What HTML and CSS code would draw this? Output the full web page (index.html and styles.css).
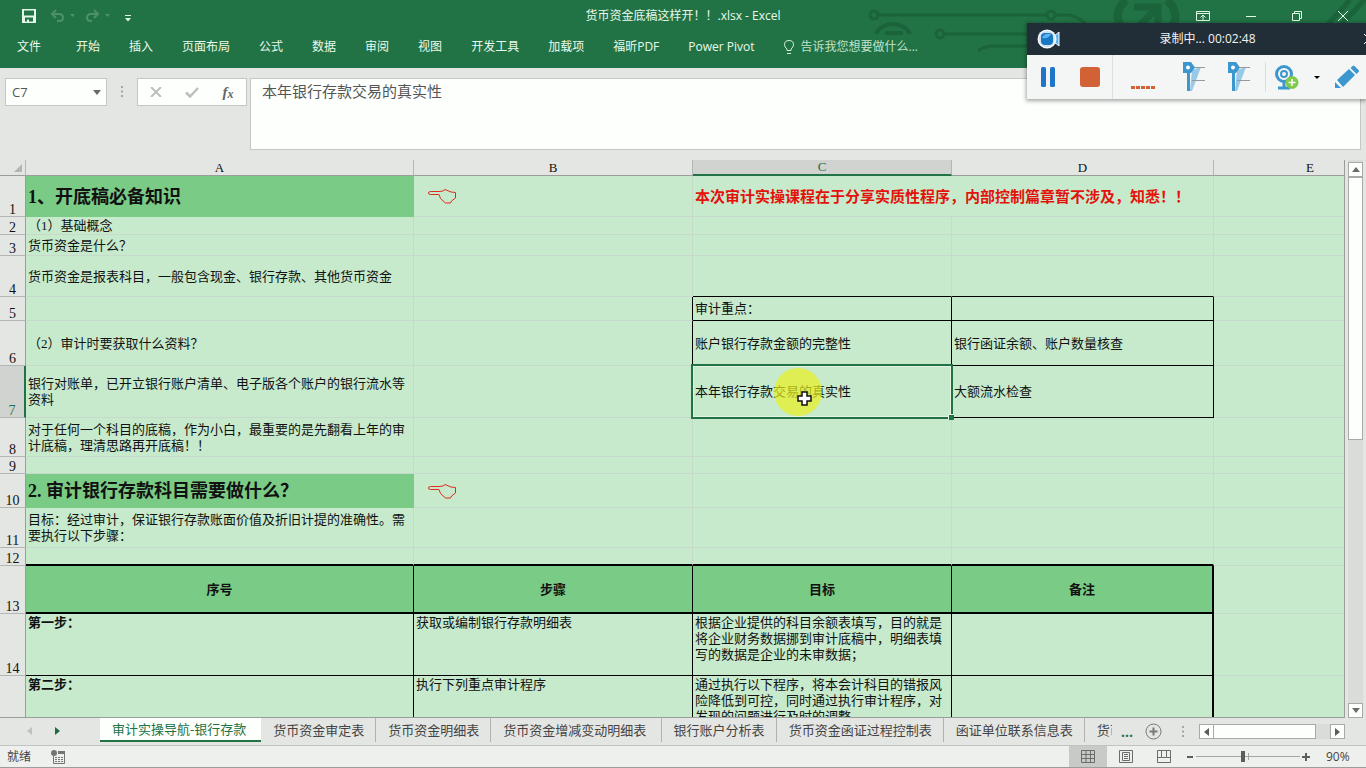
FILE: index.html
```html
<!DOCTYPE html>
<html lang="zh-CN">
<head>
<meta charset="utf-8">
<meta name="viewport" content="width=device-width, initial-scale=1">
<title>货币资金底稿这样开！！.xlsx - Excel</title>
<link rel="stylesheet" href="styles.css">
</head>
<body>
<div class="app">
  <header class="ribbon">
    <svg class="circuit" width="510" height="68" viewBox="0 0 510 68" fill="none" stroke="#1b633b" stroke-width="3" aria-hidden="true">
      <circle cx="18" cy="15" r="4"/><path d="M22 15h169"/><circle cx="195" cy="15" r="4"/><path d="M199 15h12q8 0 18 8"/>
      <path d="M20 34a18 15 0 0 1 34 0" stroke-width="4"/><path d="M29 33h18" stroke-width="4"/>
      <circle cx="84" cy="34" r="4"/><path d="M88 34h100"/><path d="M122 51q6-5 16-5h40" />
      <path d="M270 0q-15 14-3 30M311 0q15 14 3 30" stroke-width="8"/><path d="M278 7h24v20M302 7l-20 20" stroke-width="7"/>
      <path d="M472 24l22-24M486 24l24-26" stroke-width="5"/>
    </svg>
    <div class="titlebar">
      <div class="quick">
        <button class="icon-btn" aria-label="保存"><svg width="14" height="14" viewBox="0 0 14 14"><path fill="#e4f8e8" fill-rule="evenodd" d="M0 0h14v14H0zM2 1.500v5h10v-5zM3 8.500v4h2v-2h2v2h4v-4z"/></svg></button>
        <button class="icon-btn undo" aria-label="撤消"><svg width="26" height="14" viewBox="0 0 26 14" fill="none" stroke="#4d9069" stroke-width="2"><path d="M6 1L2 5l4 4M2 5h7q4 0 4 3.500T9 12H7"/><path d="M20 5h5l-2.500 3z" fill="#4d9069" stroke="none"/></svg></button>
        <button class="icon-btn redo" aria-label="恢复"><svg width="26" height="14" viewBox="0 0 26 14" fill="none" stroke="#4d9069" stroke-width="2"><path d="M9 1l4 4-4 4M13 5H6Q2 5 2 8.500T6 12h1"/><path d="M20 5h5l-2.500 3z" fill="#4d9069" stroke="none"/></svg></button>
        <button class="icon-btn custom" aria-label="自定义快速访问工具栏"><svg width="6" height="7" viewBox="0 0 6 7" fill="#e4f8e8"><path d="M0 0h6v1H0zM0 3h6L3 6.500z"/></svg></button>
      </div>
      <h1 class="title">货币资金底稿这样开！！.xlsx - Excel</h1>
      <div class="window-btns">
        <button class="icon-btn" aria-label="功能区显示选项"><svg width="14" height="12" viewBox="0 0 14 12" fill="none" stroke="#e4f8e8"><path d="M.5 1.500h13v9H.5zM1 3.500h12M7 10V5M4.500 7.500L7 5l2.500 2.500"/></svg></button>
        <button class="icon-btn" aria-label="最小化"><svg width="10" height="12" viewBox="0 0 10 12" stroke="#e4f8e8"><path d="M0 6.500h10"/></svg></button>
        <button class="icon-btn" aria-label="还原"><svg width="10" height="12" viewBox="0 0 10 12" fill="none" stroke="#e4f8e8"><path d="M.5 3.500h7v7h-7zM2.500 3.500v-2h7v7h-2"/></svg></button>
        <button class="icon-btn" aria-label="关闭"><svg width="10" height="12" viewBox="0 0 10 12" stroke="#e4f8e8"><path d="M0 1l10 10M10 1L0 11"/></svg></button>
      </div>
    </div>
    <nav class="menu">
      <button class="file">文件</button><button>开始</button><button>插入</button><button>页面布局</button><button>公式</button><button>数据</button><button>审阅</button><button>视图</button><button>开发工具</button><button>加载项</button><button>福昕PDF</button><button>Power Pivot</button>
      <button class="tell"><svg width="10" height="14" viewBox="0 0 10 14" fill="none" stroke="#d3ecd9"><path d="M3 10.500V9Q.5 7 .5 4.800 .5.500 5 .5t4.500 4.300Q9.500 7 7 9v1.500zM3 13.500h4"/></svg>告诉我您想要做什么...</button>
    </nav>
  </header>

  <section class="formula">
    <div class="namebox"><input aria-label="名称框" value="C7"><button class="icon-btn" aria-label="展开名称框"><svg width="8" height="5" viewBox="0 0 8 5"><path fill="#686a68" d="M0 0h8L4 5z"/></svg></button></div>
    <svg class="grip" width="2" height="11" viewBox="0 0 2 11" fill="#a5a7a5"><path d="M0 0h2v2H0zM0 4.500h2v2H0zM0 9h2v2H0z"/></svg>
    <div class="fx">
      <button class="icon-btn" aria-label="取消"><svg width="12" height="10" viewBox="0 0 12 10" stroke="#bdbfbd" stroke-width="2"><path d="M1 0l10 10M11 0L1 10"/></svg></button>
      <button class="icon-btn" aria-label="输入"><svg width="14" height="11" viewBox="0 0 14 11" fill="none" stroke="#bdbfbd" stroke-width="2.500"><path d="M1 5.500l4 4L13 1"/></svg></button>
      <button class="icon-btn fn" aria-label="插入函数">f<small>x</small></button>
    </div>
    <textarea aria-label="编辑栏" spellcheck="false">本年银行存款交易的真实性</textarea>
  </section>

  <main class="work">
    <div class="sheet">
      <table>
        <colgroup><col class="c-num"><col class="c-a"><col class="c-b"><col class="c-c"><col class="c-d"><col></colgroup>
        <thead>
          <tr><th class="corner"><svg width="8" height="8" viewBox="0 0 8 8"><path fill="#b4b6b4" d="M8 0v8H0z"/></svg></th><th>A</th><th>B</th><th class="on">C</th><th>D</th><th class="e">E</th></tr>
        </thead>
        <tbody>
          <tr class="h41"><th>1</th><td class="fill big">1、开底稿必备知识</td><td class="hand"><svg width="28" height="15" viewBox="0 0 28 15" fill="none" stroke="#e0291f"><path d="M11 2.500H2.500Q.5 2.500.5 4t2 1.500H11l1.500 4 5 4.500h5l1-2 4-3V3.500L23 3l-6-2.500-2 1.500z"/></svg></td><td class="red" colspan="2">本次审计实操课程在于分享实质性程序，内部控制篇章暂不涉及，知悉！！</td><td></td></tr>
          <tr class="h18"><th>2</th><td>（1）基础概念</td><td></td><td></td><td></td><td></td></tr>
          <tr class="h21"><th>3</th><td>货币资金是什么？</td><td></td><td></td><td></td><td></td></tr>
          <tr class="h41"><th>4</th><td>货币资金是报表科目，一般包含现金、银行存款、其他货币资金</td><td></td><td class="bb"></td><td class="bb"></td><td></td></tr>
          <tr class="h24"><th>5</th><td></td><td class="br"></td><td class="bb br">审计重点：</td><td class="bb br"></td><td></td></tr>
          <tr class="h45"><th>6</th><td>（2）审计时要获取什么资料？</td><td class="br"></td><td class="bb br">账户银行存款金额的完整性</td><td class="bb br">银行函证余额、账户数量核查</td><td></td></tr>
          <tr class="h52"><th class="on">7</th><td>银行对账单，已开立银行账户清单、电子版各个账户的银行流水等资料</td><td class="br"></td><td class="bb br selected"><span class="spot"></span>本年银行存款交易的真实性<svg class="cursor" width="15" height="15" viewBox="0 0 15 15"><path fill="#fff" stroke="#111" stroke-width="1.500" d="M5 1h5v4h4v5h-4v4H5v-4H1V5h4z"/></svg><span class="handle"></span></td><td class="bb br">大额流水检查</td><td></td></tr>
          <tr class="h39"><th>8</th><td>对于任何一个科目的底稿，作为小白，最重要的是先翻看上年的审计底稿，理清思路再开底稿！！</td><td></td><td></td><td></td><td></td></tr>
          <tr class="h17"><th>9</th><td></td><td></td><td></td><td></td><td></td></tr>
          <tr class="h34"><th>10</th><td class="fill big">2. 审计银行存款科目需要做什么？</td><td class="hand"><svg width="28" height="15" viewBox="0 0 28 15" fill="none" stroke="#e0291f"><path d="M11 2.500H2.500Q.5 2.500.5 4t2 1.500H11l1.500 4 5 4.500h5l1-2 4-3V3.500L23 3l-6-2.500-2 1.500z"/></svg></td><td></td><td></td><td></td></tr>
          <tr class="h40"><th>11</th><td>目标：经过审计，保证银行存款账面价值及折旧计提的准确性。需要执行以下步骤：</td><td></td><td></td><td></td><td></td></tr>
          <tr class="h18 thick"><th>12</th><td></td><td></td><td></td><td></td><td></td></tr>
          <tr class="h48 thick heads"><th>13</th><td>序号</td><td>步骤</td><td>目标</td><td>备注</td><td></td></tr>
          <tr class="h62 steps"><th>14</th><td><b>第一步：</b></td><td>获取或编制银行存款明细表</td><td>根据企业提供的科目余额表填写，目的就是将企业财务数据挪到审计底稿中，明细表填写的数据是企业的未审数据；</td><td></td><td></td></tr>
          <tr class="h62 steps"><th></th><td><b>第二步：</b></td><td>执行下列重点审计程序</td><td>通过执行以下程序，将本会计科目的错报风险降低到可控，同时通过执行审计程序，对发现的问题进行及时的调整</td><td></td><td></td></tr>
        </tbody>
      </table>
    </div>
    <div class="vscroll">
      <button class="arrow" aria-label="向上滚动"><svg width="8" height="5" viewBox="0 0 8 5"><path fill="#6a6c6a" d="M0 5h8L4 0z"/></svg></button>
      <div class="vthumb"></div>
      <button class="arrow down" aria-label="向下滚动"><svg width="8" height="5" viewBox="0 0 8 5"><path fill="#6a6c6a" d="M0 0h8L4 5z"/></svg></button>
    </div>
  </main>

  <div class="sheetbar">
    <div class="sheetnav">
      <button class="icon-btn" aria-label="上一张"><svg width="5" height="8" viewBox="0 0 5 8"><path fill="#bfc1bf" d="M5 0v8L0 4z"/></svg></button>
      <button class="icon-btn" aria-label="下一张"><svg width="5" height="8" viewBox="0 0 5 8"><path fill="#1e6b41" d="M0 0v8l5-4z"/></svg></button>
    </div>
    <div class="tabs">
      <button class="tab active">审计实操导航-银行存款</button><button class="tab">货币资金审定表</button><button class="tab">货币资金明细表</button><button class="tab">货币资金增减变动明细表&nbsp;</button><button class="tab">银行账户分析表</button><button class="tab">货币资金函证过程控制表</button><button class="tab">函证单位联系信息表</button><button class="tab">货币</button>
    </div>
    <div class="tabtools">
      <button class="more" aria-label="更多工作表">...</button>
      <button class="icon-btn" aria-label="新工作表"><svg width="17" height="17" viewBox="0 0 17 17" fill="none" stroke="#777977"><circle cx="8.500" cy="8.500" r="7.500"/><path stroke-width="2" d="M8.500 4.500v8M4.500 8.500h8"/></svg></button>
      <svg class="grip" width="2" height="11" viewBox="0 0 2 11" fill="#a5a7a5"><path d="M0 0h2v2H0zM0 4.500h2v2H0zM0 9h2v2H0z"/></svg>
      <div class="hscroll">
        <button class="arrow" aria-label="向左滚动"><svg width="5" height="8" viewBox="0 0 5 8"><path fill="#5a5c5a" d="M5 0v8L0 4z"/></svg></button>
        <div class="hthumb"></div>
        <button class="arrow right" aria-label="向右滚动"><svg width="5" height="8" viewBox="0 0 5 8"><path fill="#5a5c5a" d="M0 0v8l5-4z"/></svg></button>
      </div>
    </div>
  </div>

  <footer class="status">
    <span>就绪</span>
    <svg class="macro" width="14" height="14" viewBox="0 0 14 14"><path fill="none" stroke="#737573" d="M2.500 6v7.500h11V3H7"/><path fill="#737573" d="M7 1h7v3H7zM4 7h2v1H4zM7 7h2v1H7zM10 7h2v1h-2zM4 9h2v1H4zM7 9h2v1H7zM10 9h2v1h-2zM4 11h2v1H4zM7 11h2v1H7zM10 11h2v1h-2z"/><circle cx="3" cy="3" r="3" fill="#737573"/></svg>
    <div class="views">
      <button class="view on" aria-label="普通"><svg width="14" height="13" viewBox="0 0 14 13" fill="none" stroke="#6b6d6b"><path d="M.5.500h13v12H.5zM.5 4.500h13M.5 8.500h13M5 .5v12M9.500.500v12"/></svg></button>
      <button class="view" aria-label="页面布局"><svg width="14" height="13" viewBox="0 0 14 13" fill="none" stroke="#6b6d6b"><path d="M.5.500h13v12H.5zM3.500 2.500h7v8h-7zM5 4.500h4M5 6.500h4M5 8.500h4"/></svg></button>
      <button class="view" aria-label="分页预览"><svg width="14" height="13" viewBox="0 0 14 13" fill="none" stroke="#6b6d6b"><path d="M.5.500h13v12H.5zM4.500.500v7h5v-7M.5 7.500h4M9.500 7.500h4"/></svg></button>
    </div>
    <div class="zoom">
      <button class="icon-btn" aria-label="缩小"><svg width="8" height="8" viewBox="0 0 8 8"><path fill="#5c5e5c" d="M1 3h6v2H1z"/></svg></button>
      <input type="range" min="0" max="100" value="45" aria-label="显示比例">
      <button class="icon-btn" aria-label="放大"><svg width="8" height="8" viewBox="0 0 8 8"><path fill="#5c5e5c" d="M0 3h3V0h2v3h3v2H5v3H3V5H0z"/></svg></button>
      <output>90%</output>
    </div>
  </footer>

  <aside class="recorder">
    <div class="rec-head">
      <svg width="23" height="20" viewBox="0 0 23 20"><path d="M16 8l6-5v14l-6-5z" fill="#58b4ee" stroke="#fff"/><circle cx="10" cy="10" r="9.500" fill="#f5f9fd"/><circle cx="10" cy="10" r="8" fill="#cddff0"/><rect x="4" y="4" width="12" height="12" rx="4" fill="#1778c4"/><path d="M5 9q2-5 9-4-2 5-9 4z" fill="#5fb4ec"/></svg>
      <span class="rec-time">录制中... 00:02:48</span>
      <button class="icon-btn rec-close" aria-label="关闭录制"><svg width="10" height="10" viewBox="0 0 10 10" stroke="#fff"><path d="M0 0l10 10M10 0L0 10"/></svg></button>
    </div>
    <div class="rec-body">
      <button class="icon-btn" aria-label="暂停"><svg width="14" height="20" viewBox="0 0 14 20" fill="#1f76c8"><rect width="5" height="20" rx="1.500"/><rect x="9" width="5" height="20" rx="1.500"/></svg></button>
      <button class="icon-btn stop" aria-label="停止"><svg width="20" height="20" viewBox="0 0 20 20"><rect width="20" height="20" rx="3" fill="#d26235"/></svg></button>
      <span class="level"><svg width="25" height="3" viewBox="0 0 25 3" fill="#d26235"><path d="M0 0h4v3H0zM5 0h4v3H5zM10 0h4v3h-4zM15 0h4v3h-4zM20 0h4v3h-4z"/></svg></span>
      <span class="vol"><svg width="22" height="30" viewBox="0 0 22 30"><path fill="#98c9e6" d="M9 8l9-3L9 29H7z"/><path stroke="#93999c" d="M9 5.500h13M9 18.500h13"/><path fill="#3d97cf" d="M0 0h8l4 5.500L8 11H0zM4 10h3v19H4z"/><circle cx="5" cy="5.500" r="2" fill="#fff"/></svg></span>
      <span class="vol second"><svg width="22" height="30" viewBox="0 0 22 30"><path fill="#98c9e6" d="M9 8l9-3L9 29H7z"/><path stroke="#93999c" d="M9 5.500h13M9 18.500h13"/><path fill="#3d97cf" d="M0 0h8l4 5.500L8 11H0zM4 10h3v19H4z"/><circle cx="5" cy="5.500" r="2" fill="#fff"/></svg></span>
      <button class="icon-btn cam" aria-label="摄像头"><svg width="24" height="25" viewBox="0 0 24 25"><g fill="none" stroke="#3d97cf"><circle cx="9" cy="9" r="7.500" stroke-width="3"/><circle cx="9" cy="9" r="3" stroke-width="2"/><path d="M9 16v6M3 23h12" stroke-width="3"/></g><circle cx="17" cy="17.500" r="6.500" fill="#7fc94b"/><path stroke="#fff" stroke-width="1.500" d="M17 14v7M13.500 17.500h7"/></svg></button>
      <button class="icon-btn caret" aria-label="摄像头选项"><svg width="6" height="3" viewBox="0 0 6 3"><path d="M0 0h6L3 3z"/></svg></button>
      <button class="icon-btn" aria-label="画笔"><svg width="24" height="24" viewBox="0 0 24 24" fill="#3d97cf"><path d="M2 15L14 4l6 6L8 22zM15.500 3l2-2q1-1 2 0l4 4q1 1 0 2l-2 2zM0 17l6 6H0z"/></svg></button>
    </div>
  </aside>
</div>
</body>
</html>
```

FILE: styles.css
```css
* { box-sizing: border-box; }
body { margin: 0; font: 12px/16px "Open Sans", "Noto Sans CJK SC", sans-serif; color: #444; }
button, input, textarea { font: inherit; color: inherit; border: 0; margin: 0; padding: 0; background: none; border-radius: 0; outline: 0; }
button { cursor: pointer; white-space: nowrap; }
svg { display: block; flex: none; }
.icon-btn { display: flex; align-items: center; justify-content: center; }
.app { position: relative; display: flex; flex-direction: column; height: 100vh; background: #e4e6e3; overflow: hidden; }

/* Title bar and ribbon tabs */
.ribbon { position: relative; background: #217346; color: #e9faec; height: 68px; }
.circuit { position: absolute; top: 0; right: 0; }
.titlebar { position: relative; display: grid; grid-template-columns: 1fr auto 1fr; align-items: center; height: 32px; }
.quick { display: flex; align-items: center; padding-left: 22px; }
.undo { margin-left: 14px; }
.redo { margin-left: 9px; }
.custom { margin: 4px 0 0 14px; }
.title { margin: 0; font-size: 12px; font-weight: 400; }
.window-btns { display: flex; justify-content: flex-end; gap: 36px; padding-right: 18px; }
.menu { position: relative; display: flex; align-items: center; gap: 29px; height: 30px; padding-left: 17px; }
.file { margin-right: 6px; }
.tell { display: flex; align-items: center; gap: 7px; color: #c0e2ca; }

/* Name box and formula bar */
.formula { display: flex; align-items: flex-start; height: 92px; padding: 10px 5px 10px; color: #555; }
.namebox { display: flex; width: 102px; height: 28px; background: #fdfffc; border: 1px solid #c5c7c4; }
.namebox input { flex: 1; min-width: 0; padding-left: 6px; font-size: 13px; }
.namebox button { width: 18px; }
.formula .grip { margin: 8px 14px 0; }
.fx { display: flex; width: 110px; height: 28px; background: #fdfffc; border: 1px solid #c5c7c4; }
.fx button { flex: 1; }
.fx .fn { font: italic bold 15px/16px "Liberation Serif", serif; color: #666; }
.fn small { font-size: 12px; margin-top: 3px; }
.formula textarea { flex: 1; height: 72px; margin-left: 3px; padding: 0 11px; border: 1px solid #c5c7c4; background: #fdfffc; resize: none; font-size: 15px; line-height: 24px; }

/* Worksheet grid */
.work { display: flex; flex: 1; min-height: 0; }
.sheet { flex: 1; min-width: 0; overflow: hidden; border-right: 1px solid #9b9d9b; border-bottom: 1px solid #9b9d9b; background: #c7eacd; }
table { width: 100%; table-layout: fixed; border-collapse: separate; border-spacing: 0; font: 13px/16px "Liberation Serif", "Noto Sans CJK SC", serif; color: #111; }
.c-num { width: 26px; }
.c-a { width: 388px; }
.c-b { width: 279px; }
.c-c { width: 259px; }
.c-d { width: 262px; }
th { padding: 0; font-weight: 400; background: #e4e6e3; border-right: 1px solid #9b9d9b; }
thead th { height: 16px; line-height: 14px; border-right-color: #b4b6b3; border-bottom: 1px solid #9b9d9b; }
thead .on { background: #d1d3d0; color: #217346; border-bottom: 2px solid #217346; }
thead .e { text-align: right; padding-right: 30px; border-right: 0; }
.corner svg { margin-left: 14px; }
tbody th { vertical-align: bottom; line-height: 12px; font-size: 14px; border-bottom: 1px solid #b4b6b3; }
tbody .on { background: #d1d3d0; color: #217346; border-right: 2px solid #217346; }
td { padding: 1px 2px 0; vertical-align: middle; border-right: 1px solid #c6d9cb; border-bottom: 1px solid #c6d9cb; }
td:last-child { border-right: 0; }
.h17 { height: 17px; }
.h18 { height: 18px; }
.h21 { height: 21px; }
.h24 { height: 24px; }
.h34 { height: 34px; }
.h39 { height: 39px; }
.h40 { height: 40px; }
.h41 { height: 41px; }
.h45 { height: 45px; }
.h48 { height: 48px; }
.h52 { height: 52px; }
.h62 { height: 62px; }
.fill { background: #7acb85; border-color: #7acb85; }
.big { font-size: 18px; font-weight: 700; line-height: 24px; }
.red { color: #e3120b; font-size: 15px; font-weight: 700; }
.hand { padding-left: 14px; }
.bb { border-bottom-color: #000; }
.br { border-right-color: #000; }
.selected { position: relative; }
.selected::after { content: ""; position: absolute; inset: -2px; border: 2px solid #217346; box-shadow: inset 0 0 0 1px #e2f3e4; }
.spot { position: absolute; left: 81px; top: 2px; width: 48px; height: 48px; border-radius: 50%; background: #e8ef1f; opacity: .7; }
.cursor { position: absolute; left: 104px; top: 25px; }
.handle { position: absolute; z-index: 1; right: -3px; bottom: -3px; width: 6px; height: 6px; background: #217346; border: 1px solid #e2f3e4; border-width: 1px 0 0 1px; }
.thick td:not(:last-child) { border-bottom: 2px solid #000; }
.heads td:not(:last-child) { text-align: center; font-weight: 700; background: #7acb85; border-right-color: #000; }
.steps td { vertical-align: top; }
.steps td:not(:last-child) { border-right-color: #000; border-bottom-color: #000; }
.heads td:nth-child(5), .steps td:nth-child(5) { border-right-width: 2px; }

/* Scroll bars */
.vscroll { display: flex; flex-direction: column; width: 21px; padding: 2px 3px 0; background: linear-gradient(#dadcd9, #dadcd9) center / 15px 100% no-repeat; }
.arrow { display: flex; align-items: center; justify-content: center; width: 15px; height: 15px; background: #fdfffc; border: 1px solid #a8aaa7; }
.vthumb { height: 263px; background: #fdfffc; border: 1px solid #a8aaa7; }
.down { margin-top: auto; }
.hscroll { display: flex; width: 146px; background: #dadcd9; }
.hthumb { width: 102px; background: #fdfffc; border: 1px solid #a8aaa7; border-left: 0; }
.right { margin-left: auto; }

/* Sheet tabs */
.sheetbar { display: flex; height: 28px; border-bottom: 1px solid #c1c3c0; }
.sheetnav { display: flex; align-items: center; gap: 23px; width: 100px; padding: 0 0 2px 27px; }
.tabs { display: flex; flex: 1; min-width: 0; overflow: hidden; }
.tab { flex: none; height: 24px; padding: 0 11px 0 12px; border-right: 1px solid #b0b2af; font-size: 13px; }
.tab.active { padding-right: 15px; background: #fdfffc; color: #217346; border-right: 0; border-bottom: 2px solid #217346; }
.tab:last-child { border-right: 0; }
.tabtools { display: flex; align-items: center; width: 254px; padding-left: 8px; }
.more { width: 14px; font-weight: 700; color: #217346; font-size: 14px; }
.tabtools > .icon-btn { margin-left: 11px; }
.tabtools .grip { margin: 0 15px 0 20px; }

/* Status bar */
.status { display: flex; align-items: center; height: 22px; padding-left: 7px; background: #eef0ed; border-bottom: 1px solid #9b9d9b; }
.macro { margin-left: 20px; }
.views { display: flex; align-self: stretch; margin-left: auto; }
.view { display: flex; align-items: center; justify-content: center; width: 38px; }
.view.on { background: #c8cac7; }
.zoom { display: flex; align-items: center; width: 183px; padding-left: 3px; }
.zoom input { appearance: none; width: 104px; height: 12px; margin: 0 2px; background: linear-gradient(#a5a7a5, #a5a7a5) center / 100% 1px no-repeat, linear-gradient(#a5a7a5, #a5a7a5) center / 1px 7px no-repeat; }
.zoom input::-webkit-slider-thumb { appearance: none; width: 4px; height: 11px; background: #5c5e5c; }
.zoom output { margin-left: 16px; }

/* Floating recorder */
.recorder { position: absolute; top: 23px; right: 0; width: 339px; overflow: hidden; background: #f4f6f6; box-shadow: 0 1px 4px 1px rgba(0, 0, 0, .35); }
.rec-head { display: grid; grid-template-columns: 1fr auto 1fr; align-items: center; height: 32px; padding-left: 10px; background: #212d37; color: #f2f5f5; }
.rec-time { padding-left: 12px; }
.rec-close { justify-self: end; width: 2px; overflow: hidden; justify-content: flex-start; }
.rec-body { display: flex; align-items: center; height: 44px; padding-left: 14px; }
.stop { margin-left: 25px; }
.level { align-self: stretch; display: flex; align-items: flex-end; width: 66px; margin-left: 12px; padding: 0 0 10px 18px; border-left: 1px solid #dcdfe1; }
.vol { margin-left: 5px; }
.second { width: 38px; margin-left: 23px; border-right: 1px solid #dcdfe1; }
.cam { margin-left: 9px; }
.caret { margin: 0 15px; }
```
